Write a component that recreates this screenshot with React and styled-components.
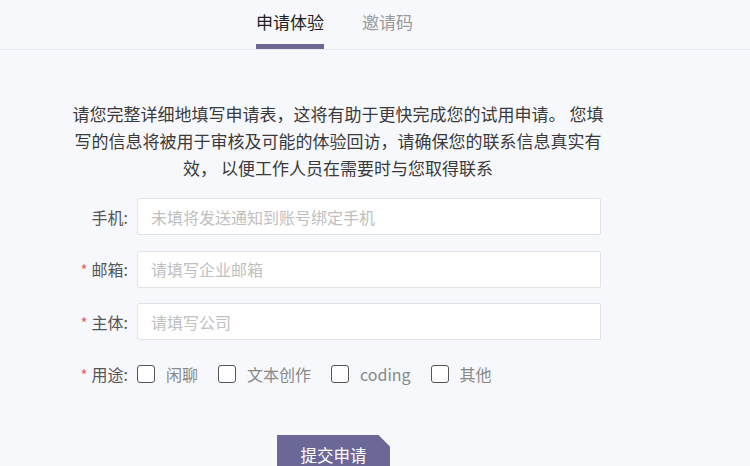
import React from 'react';
import styled, { createGlobalStyle } from 'styled-components';

const GlobalStyle = createGlobalStyle`
  html, body {
    margin: 0;
    padding: 0;
    background: #f7f8fc;
    font-family: "Noto Sans CJK SC", "Noto Sans", sans-serif;
  }
  * { box-sizing: border-box; }
`;

const Page = styled.div`
  width: 750px;
  height: 466px;
  overflow: hidden;
  background: #f7f8fc;
`;

const Header = styled.div`
  height: 50px;
  border-bottom: 1px solid #e7e8ee;
  display: flex;
  align-items: stretch;
  gap: 38px;
  padding-left: 256px;
`;

const Tab = styled.div`
  position: relative;
  display: flex;
  align-items: center;
  padding-bottom: 6px;
  font-size: 17px;
  color: ${(p) => (p.active ? '#222' : '#9a9a9a')};
  &::after {
    content: '';
    display: ${(p) => (p.active ? 'block' : 'none')};
    position: absolute;
    left: 0;
    right: 0;
    bottom: 0;
    height: 5px;
    background: #6a6892;
  }
`;

const Intro = styled.p`
  width: 540px;
  margin: 50px 0 0 68px;
  text-align: center;
  font-size: 17px;
  line-height: 27px;
  color: #3a3a3a;
`;

const Form = styled.div`
  margin: 17px 0 0 70px;
  width: 531px;
  display: flex;
  flex-direction: column;
  gap: 15.5px;
`;

const Row = styled.div`
  display: flex;
  align-items: center;
  height: 37px;
  gap: 9px;
`;

const Label = styled.label`
  width: 58px;
  flex-shrink: 0;
  text-align: right;
  font-size: 16px;
  color: #555;
  white-space: nowrap;
`;

const Star = styled.span`
  color: #e8605f;
  margin-right: 4px;
  font-size: 15px;
`;

const Input = styled.input`
  flex: 1;
  height: 37px;
  border: 1px solid #e2e3e8;
  border-radius: 2px;
  background: #fff;
  padding: 0 13px;
  font-family: inherit;
  font-size: 16px;
  color: #333;
  outline: none;
  &::placeholder {
    color: #c0c0c0;
  }
`;

const Options = styled.div`
  display: flex;
  align-items: center;
  gap: 20px;
`;

const Option = styled.label`
  display: flex;
  align-items: center;
  gap: 11px;
  font-size: 16px;
  color: #888;
`;

const Box = styled.span`
  width: 18px;
  height: 18px;
  border: 1.5px solid #555;
  border-radius: 3px;
  background: #fff;
`;

const ButtonRow = styled.div`
  margin: 42px 0 0 277px;
`;

const Submit = styled.button`
  width: 113px;
  height: 40px;
  border: none;
  background: #6b6898;
  color: #fff;
  font-family: inherit;
  font-size: 16.5px;
  clip-path: polygon(0 0, calc(100% - 12px) 0, 100% 12px, 100% 100%, 0 100%);
  cursor: pointer;
`;

const uses = ['闲聊', '文本创作', 'coding', '其他'];

export default function App() {
  return (
    <Page>
      <GlobalStyle />
      <Header>
        <Tab active>申请体验</Tab>
        <Tab>邀请码</Tab>
      </Header>
      <Intro>
        请您完整详细地填写申请表，这将有助于更快完成您的试用申请。 您填写的信息将被用于审核及可能的体验回访，请确保您的联系信息真实有效， 以便工作人员在需要时与您取得联系
      </Intro>
      <Form>
        <Row>
          <Label>手机:</Label>
          <Input placeholder="未填将发送通知到账号绑定手机" />
        </Row>
        <Row>
          <Label><Star>*</Star>邮箱:</Label>
          <Input placeholder="请填写企业邮箱" />
        </Row>
        <Row>
          <Label><Star>*</Star>主体:</Label>
          <Input placeholder="请填写公司" />
        </Row>
        <Row>
          <Label><Star>*</Star>用途:</Label>
          <Options>
            {uses.map((u) => (
              <Option key={u}>
                <Box />
                {u}
              </Option>
            ))}
          </Options>
        </Row>
      </Form>
      <ButtonRow>
        <Submit>提交申请</Submit>
      </ButtonRow>
    </Page>
  );
}
